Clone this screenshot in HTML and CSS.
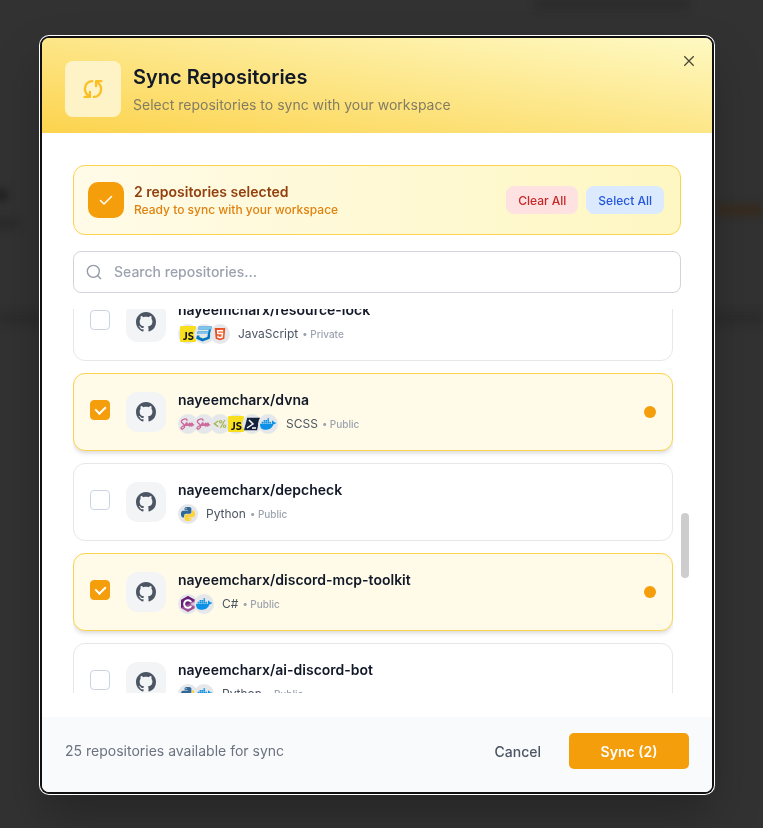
FILE: index.html
```
<!DOCTYPE html>
<html lang="en">
<head>
  <meta charset="UTF-8">
  <meta name="viewport" content="width=device-width, initial-scale=1.0">
  <title>Sync Repositories</title>
  <link rel="stylesheet" href="styles.css">
</head>
<body>
  <!-- Icon sprite -->
  <svg class="sprite" aria-hidden="true">
    <symbol id="icon-github" viewBox="0 0 16 16">
      <path fill="currentColor" d="M8 0C3.58 0 0 3.58 0 8c0 3.54 2.29 6.53 5.47 7.59.4.07.55-.17.55-.38 0-.19-.01-.82-.01-1.49-2.01.37-2.53-.49-2.69-.94-.09-.23-.48-.94-.82-1.13-.28-.15-.68-.52-.01-.53.63-.01 1.08.58 1.23.82.72 1.21 1.87.87 2.33.66.07-.52.28-.87.51-1.07-1.78-.2-3.64-.89-3.64-3.95 0-.87.31-1.59.82-2.15-.08-.2-.36-1.02.08-2.12 0 0 .67-.21 2.2.82.64-.18 1.32-.27 2-.27.68 0 1.36.09 2 .27 1.53-1.04 2.2-.82 2.2-.82.44 1.1.16 1.92.08 2.12.51.56.82 1.27.82 2.15 0 3.07-1.87 3.75-3.65 3.95.29.25.54.73.54 1.48 0 1.07-.01 1.93-.01 2.2 0 .21.15.46.55.38A8.013 8.013 0 0016 8c0-4.42-3.58-8-8-8z"/>
    </symbol>
    <symbol id="icon-js" viewBox="0 0 16 16">
      <rect width="16" height="16" rx="1" fill="#f7df1e"/>
      <text x="3" y="14" font-family="Lato, sans-serif" font-weight="900" font-size="11" fill="#111">JS</text>
    </symbol>
    <symbol id="icon-css" viewBox="0 0 16 16">
      <path fill="#0277bd" d="M2.8.6H16l-2.3 12.2L6.500 15.600.2 12.800l.7-3.200h2.700l-.3 1.400 3.700 1.500 4.300-1.500.6-3.100H1.200l.6-2.700h10.700l.3-1.800H2.300z"/>
      <path fill="#81c4ec" d="M2.8.6H16l-.5 2.800H2.300zM1.800 5.200h10.700l-.5 2.700H1.200z"/>
    </symbol>
    <symbol id="icon-html" viewBox="0 0 16 16">
      <path fill="#e44d26" d="M2 1h12l-1.1 12.4L8 15l-4.900-1.600z"/>
      <path fill="#f16529" d="M8 2h5l-1 10.700L8 14z"/>
      <path fill="none" stroke="#fff" stroke-width="1.6" d="M11.500 4.300H5.200l.3 3.200h5.300l-.4 3.900L8 12.200l-2.400-.8-.1-1.500"/>
    </symbol>
    <symbol id="icon-sass" viewBox="0 0 16 16">
      <path fill="none" stroke="#cd6799" stroke-width="1.3" stroke-linecap="round" d="M7 4.500C7.300 1.700 1.600 3 1.300 5.500 1.100 7.500 5 7.800 4.800 10.300 4.600 12.700.8 14 1 12c.2-2.200 5.600-2.600 6-4.700.2-1.200-1.500.1-1.300 1.600.2 1.500 1.700-.3 2.200-1.600-.5 1.900-.1 2.600 1 1.300l1.200-1.900c-.5 1.600 1 1.700 0 3-.7.8-1.200.1-.4-.4 1.300-.7 2-1.600 2.600-2.600-.5 1.600 1 1.700 0 3-.6.7-1.100.1-.4-.4 1.100-.6 2.300-.9 3.600-.6"/>
    </symbol>
    <symbol id="icon-ejs" viewBox="0 0 16 16">
      <path fill="none" stroke="#a4b648" stroke-width="1.5" d="M6 4.500 1.500 7.700 6 11"/>
      <path fill="none" stroke="#a4b648" stroke-width="1.3" d="M13.500 3.500l-5 9"/>
      <circle cx="8.800" cy="5.300" r="1.400" fill="none" stroke="#a4b648" stroke-width="1.200"/>
      <circle cx="13.200" cy="10.600" r="1.400" fill="none" stroke="#a4b648" stroke-width="1.200"/>
    </symbol>
    <symbol id="icon-powershell" viewBox="0 0 16 16">
      <path fill="#14233c" d="M3.200 1.800H16L13 14.200H0z"/>
      <path fill="none" stroke="#fff" stroke-width="1.5" d="m5 4 4 4-6 4M8 12h4"/>
    </symbol>
    <symbol id="icon-docker" viewBox="0 0 24 24">
      <path fill="#0b92e6" d="M23.763 9.89c-.065-.051-.672-.51-1.954-.51-.338.001-.676.03-1.01.087-.248-1.7-1.653-2.53-1.716-2.566l-.344-.199-.226.327c-.284.438-.49.922-.612 1.43-.23.97-.09 1.882.403 2.661-.595.332-1.55.413-1.744.42H.751a.751.751 0 00-.75.748 11.376 11.376 0 00.692 4.062c.545 1.428 1.355 2.48 2.41 3.124 1.18.723 3.1 1.137 5.275 1.137.983.003 1.963-.086 2.93-.266a12.248 12.248 0 003.823-1.389c.98-.567 1.86-1.288 2.61-2.136 1.252-1.418 1.998-2.997 2.553-4.4h.221c1.372 0 2.215-.549 2.68-1.009.309-.293.55-.65.707-1.046z"/>
      <path fill="#0b92e6" d="M2.500 8.700h2.400v2.400H2.500zM5.400 8.700h2.400v2.400H5.400zM8.300 8.700h2.400v2.400H8.300zM11.200 8.700h2.400v2.400h-2.400zM14.100 8.700h2.400v2.400h-2.400zM5.400 6h2.400v2.300H5.400zM8.300 6h2.400v2.300H8.300zM11.200 6h2.400v2.300h-2.400zM11.200 3.300h2.400v2.300h-2.400z"/>
    </symbol>
    <symbol id="icon-csharp" viewBox="0 0 16 16">
      <path fill="#9b4f96" d="M8 0l7 4v8l-7 4-7-4V4z"/>
      <path fill="#68217a" d="M8 0l7 4L1 12V4z"/>
      <path fill="none" stroke="#fff" stroke-width="2" d="M11.200 6a3.800 3.800 0 1 0 0 4"/>
      <path fill="none" stroke="#fff" stroke-width=".5" d="M11 7.400h3.500M11 8.800h3.500M12.200 6.300v3.500M13.500 6.300v3.500"/>
    </symbol>
    <symbol id="icon-python" viewBox="0 0 24 24">
      <g fill="#306998">
        <path id="snake" d="M14.25.18l.9.2.73.26.59.3.45.32.34.34.25.34.16.33.1.3.04.26.02.2-.01.13V8.5l-.05.63-.13.55-.21.46-.26.38-.3.31-.33.25-.35.19-.35.14-.33.1-.3.07-.26.04-.21.02H8.77l-.69.05-.59.14-.5.22-.41.27-.33.32-.27.35-.2.36-.15.37-.1.35-.07.32-.04.27-.02.21v3.06H3.17l-.21-.03-.28-.07-.32-.12-.35-.18-.36-.26-.36-.36-.35-.46-.32-.59-.28-.73-.21-.88-.14-1.05-.05-1.23.06-1.22.16-1.04.24-.87.32-.71.36-.57.4-.44.42-.33.42-.24.4-.16.36-.1.32-.05.24-.01h.16l.06.01h8.16v-.83H6.18l-.01-2.75-.02-.37.05-.34.11-.31.17-.28.25-.26.31-.23.38-.2.44-.18.51-.15.58-.12.64-.1.71-.06.77-.04.84-.02 1.27.05zm-6.3 1.98l-.23.33-.08.41.08.41.23.34.33.22.41.09.41-.09.33-.22.23-.34.08-.41-.08-.41-.23-.33-.33-.22-.41-.09-.41.09z"/>
      </g>
      <use href="#snake" fill="#ffd43b" transform="rotate(180 12 12)"/>
    </symbol>
  </svg>

  <!-- Dimmed page behind the dialog -->
  <div class="backdrop" aria-hidden="true">
    <span class="smudge smudge-top"></span>
    <span class="smudge smudge-name"></span>
    <span class="smudge smudge-meta"></span>
    <span class="smudge smudge-link"></span>
    <span class="smudge smudge-band"></span>
  </div>

  <div class="overlay">
    <div class="dialog" role="dialog" aria-modal="true" aria-labelledby="dialog-title">
      <header class="dialog-header">
        <div class="header-icon">
          <svg width="20" height="20" viewBox="0 0 24 24" fill="none" stroke="currentColor" stroke-width="2.8" stroke-linecap="round" stroke-linejoin="round">
            <path d="M11 2.500C6 2.500 2.300 6.500 2.300 12c0 3.500 2 6.500 5.500 8.700M2 21.500h6.300v-6"/>
            <path d="M13 21.500c5 0 8.700-4 8.700-9.500 0-3.500-2-6.500-5.500-8.700M22 2.500h-6.300v6"/>
          </svg>
        </div>
        <div class="header-text">
          <h2 class="dialog-title" id="dialog-title">Sync Repositories</h2>
          <p class="dialog-subtitle">Select repositories to sync with your workspace</p>
        </div>
        <button class="close-btn" type="button" aria-label="Close">
          <svg width="16" height="16" viewBox="0 0 16 16" fill="none" stroke="currentColor" stroke-width="1.3">
            <path d="M3.300 3.300l9.400 9.400M12.700 3.300l-9.400 9.400"/>
          </svg>
        </button>
      </header>

      <main class="dialog-body">
        <section class="selection">
          <div class="selection-icon">
            <svg width="16" height="16" viewBox="0 0 16 16" fill="none" stroke="currentColor" stroke-width="1.5" stroke-linecap="round" stroke-linejoin="round">
              <path d="M2.500 8.500l3.500 3.500 7.500-7.500"/>
            </svg>
          </div>
          <div class="selection-text">
            <p class="selection-count">2 repositories selected</p>
            <p class="selection-hint">Ready to sync with your workspace</p>
          </div>
          <button class="pill pill-red" type="button">Clear All</button>
          <button class="pill pill-blue" type="button">Select All</button>
        </section>

        <label class="search">
          <svg width="16" height="16" viewBox="0 0 24 24" fill="none" stroke="currentColor" stroke-width="2" stroke-linecap="round">
            <circle cx="11" cy="11" r="9"/>
            <path d="M22 22l-4.300-4.300"/>
          </svg>
          <input class="search-input" type="text" placeholder="Search repositories..." aria-label="Search repositories">
        </label>

        <div class="repo-area">
          <div class="repo-scroll" id="repo-scroll">
            <label class="repo">
              <input class="repo-check" type="checkbox">
              <span class="repo-avatar"><svg width="20" height="20"><use href="#icon-github"/></svg></span>
              <span class="repo-info">
                <span class="repo-name">nayeemcharx/resource-lock</span>
                <span class="repo-meta">
                  <span class="langs">
                    <span class="lang"><svg width="16" height="16"><use href="#icon-js"/></svg></span>
                    <span class="lang"><svg width="16" height="16"><use href="#icon-css"/></svg></span>
                    <span class="lang"><svg width="14" height="14"><use href="#icon-html"/></svg></span>
                  </span>
                  <span class="lang-name">JavaScript</span>
                  <span class="visibility">• Private</span>
                </span>
              </span>
            </label>

            <label class="repo selected">
              <input class="repo-check" type="checkbox" checked>
              <span class="repo-avatar"><svg width="20" height="20"><use href="#icon-github"/></svg></span>
              <span class="repo-info">
                <span class="repo-name">nayeemcharx/dvna</span>
                <span class="repo-meta">
                  <span class="langs">
                    <span class="lang"><svg width="16" height="16"><use href="#icon-sass"/></svg></span>
                    <span class="lang"><svg width="16" height="16"><use href="#icon-sass"/></svg></span>
                    <span class="lang"><svg width="14" height="14"><use href="#icon-ejs"/></svg></span>
                    <span class="lang"><svg width="16" height="16"><use href="#icon-js"/></svg></span>
                    <span class="lang"><svg width="16" height="16"><use href="#icon-powershell"/></svg></span>
                    <span class="lang"><svg width="16" height="16"><use href="#icon-docker"/></svg></span>
                  </span>
                  <span class="lang-name">SCSS</span>
                  <span class="visibility">• Public</span>
                </span>
              </span>
              <span class="dot"></span>
            </label>

            <label class="repo">
              <input class="repo-check" type="checkbox">
              <span class="repo-avatar"><svg width="20" height="20"><use href="#icon-github"/></svg></span>
              <span class="repo-info">
                <span class="repo-name">nayeemcharx/depcheck</span>
                <span class="repo-meta">
                  <span class="langs">
                    <span class="lang"><svg width="14" height="14"><use href="#icon-python"/></svg></span>
                  </span>
                  <span class="lang-name">Python</span>
                  <span class="visibility">• Public</span>
                </span>
              </span>
            </label>

            <label class="repo selected">
              <input class="repo-check" type="checkbox" checked>
              <span class="repo-avatar"><svg width="20" height="20"><use href="#icon-github"/></svg></span>
              <span class="repo-info">
                <span class="repo-name">nayeemcharx/discord-mcp-toolkit</span>
                <span class="repo-meta">
                  <span class="langs">
                    <span class="lang"><svg width="16" height="16"><use href="#icon-csharp"/></svg></span>
                    <span class="lang"><svg width="16" height="16"><use href="#icon-docker"/></svg></span>
                  </span>
                  <span class="lang-name">C#</span>
                  <span class="visibility">• Public</span>
                </span>
              </span>
              <span class="dot"></span>
            </label>

            <label class="repo">
              <input class="repo-check" type="checkbox">
              <span class="repo-avatar"><svg width="20" height="20"><use href="#icon-github"/></svg></span>
              <span class="repo-info">
                <span class="repo-name">nayeemcharx/ai-discord-bot</span>
                <span class="repo-meta">
                  <span class="langs">
                    <span class="lang"><svg width="14" height="14"><use href="#icon-python"/></svg></span>
                    <span class="lang"><svg width="16" height="16"><use href="#icon-docker"/></svg></span>
                  </span>
                  <span class="lang-name">Python</span>
                  <span class="visibility">• Public</span>
                </span>
              </span>
            </label>
          </div>
          <div class="scroll-track"><div class="scroll-thumb"></div></div>
        </div>
      </main>

      <footer class="dialog-footer">
        <p class="footer-text">25 repositories available for sync</p>
        <button class="btn btn-cancel" type="button">Cancel</button>
        <button class="btn btn-sync" type="button">Sync (2)</button>
      </footer>
    </div>
  </div>

  <script>
    document.getElementById('repo-scroll').scrollTop = 26;
  </script>
</body>
</html>
```
FILE: styles.css
```
* {
  box-sizing: border-box;
}

body {
  margin: 0;
  font-family: Inter, "Liberation Sans", sans-serif;
  font-size: 14px;
  line-height: 20px;
  color: #111827;
  background-color: #323232;
}

h2,
p {
  margin: 0;
}

svg {
  display: block;
}

button {
  font-family: inherit;
  border: none;
  cursor: pointer;
}

.sprite {
  display: none;
}

/* Backdrop */
.backdrop {
  position: fixed;
  inset: 0;
  overflow: hidden;
}

.smudge {
  position: absolute;
  background-color: #202020;
  filter: blur(4px);
}

.smudge-top {
  top: 0;
  right: 74px;
  width: 154px;
  height: 9px;
  opacity: 0.4;
}

.smudge-name {
  top: 190px;
  left: -10px;
  width: 18px;
  height: 10px;
}

.smudge-meta {
  top: 218px;
  left: -10px;
  width: 28px;
  height: 10px;
  opacity: 0.4;
}

.smudge-link {
  top: 205px;
  right: 0;
  width: 46px;
  height: 10px;
  background-color: #3a2814;
  opacity: 0.7;
}

.smudge-band {
  top: 312px;
  left: 0;
  right: 0;
  height: 12px;
  opacity: 0.3;
}

/* Dialog */
.overlay {
  position: relative;
  display: flex;
  align-items: center;
  justify-content: center;
  min-height: 100vh;
  padding: 38px 51px 36px 42px;
}

.dialog {
  width: 100%;
  max-width: 672px;
  overflow: hidden;
  background-color: #ffffff;
  border-radius: 7px;
  box-shadow: 0 0 0 2px #101010, 0 0 0 3px #ffffff, 0 24px 48px rgba(0, 0, 0, 0.25);
}

.dialog-header {
  position: relative;
  display: flex;
  align-items: center;
  gap: 12px;
  padding: 23px 23px 16px;
  background: linear-gradient(to top right, #fcd34d, #fef9c3);
}

.header-icon {
  display: flex;
  align-items: center;
  justify-content: center;
  width: 56px;
  height: 56px;
  border-radius: 8px;
  background-color: #fef3c7;
  color: #fbbf24;
}

.dialog-title {
  margin-bottom: 4px;
  font-size: 20px;
  font-weight: 600;
  line-height: 28px;
}

.dialog-subtitle {
  color: #827c63;
}

.close-btn {
  position: absolute;
  top: 15px;
  right: 15px;
  padding: 0;
  background: none;
  color: #4a473a;
}

.dialog-body {
  display: flex;
  flex-direction: column;
  gap: 16px;
  padding: 32px 23px 24px 31px;
}

/* Selection summary */
.selection {
  display: flex;
  align-items: center;
  gap: 8px;
  margin-right: 8px;
  padding: 16px 16px 16px 14px;
  border: 1px solid #fcd34d;
  border-radius: 12px;
  background: linear-gradient(to right, #fffbe8, #fef7c2);
}

.selection-icon {
  display: flex;
  align-items: center;
  justify-content: center;
  width: 36px;
  height: 36px;
  border-radius: 10px;
  background-color: #f59e0b;
  color: #ffffff;
}

.selection-text {
  flex: 1;
  padding-left: 2px;
}

.selection-count {
  font-weight: 600;
  color: #92400e;
}

.selection-hint {
  font-size: 12px;
  font-weight: 500;
  line-height: 16px;
  color: #e0820f;
}

.pill {
  height: 28px;
  padding: 0 12px;
  border-radius: 8px;
  font-size: 12px;
  font-weight: 500;
}

.pill-red {
  background-color: #fee2e2;
  color: #c62828;
}

.pill-blue {
  background-color: #dbeafe;
  color: #2556dc;
}

/* Search */
.search {
  display: flex;
  align-items: center;
  gap: 12px;
  height: 42px;
  margin-right: 8px;
  padding: 0 12px;
  border: 1px solid #d1d5db;
  border-radius: 8px;
  color: #9299a5;
}

.search-input {
  flex: 1;
  min-width: 0;
  padding: 0;
  border: none;
  outline: none;
  font: inherit;
  font-weight: 500;
}

.search-input::placeholder {
  color: #9ca3af;
}

/* Repository list */
.repo-area {
  display: flex;
  gap: 8px;
  height: 384px;
}

.repo-scroll {
  flex: 1;
  display: flex;
  flex-direction: column;
  gap: 12px;
  min-width: 0;
  overflow-y: auto;
  scrollbar-width: none;
}

.repo {
  display: flex;
  flex-shrink: 0;
  align-items: center;
  padding: 16px;
  border: 1px solid #e5e7eb;
  border-radius: 12px;
  cursor: pointer;
}

.repo.selected {
  border-color: #fcd34d;
  background-color: #fffbe8;
  box-shadow: 0 3px 5px -1px rgba(0, 0, 0, 0.16);
}

.repo-check {
  appearance: none;
  display: flex;
  justify-content: center;
  width: 20px;
  height: 20px;
  margin: 0 16px 5px 0;
  border: 1px solid #cbd5e1;
  border-radius: 4px;
  background-color: #ffffff;
}

.repo-check:checked {
  border-color: #f59e0b;
  background-color: #f59e0b;
}

.repo-check:checked::before {
  content: "";
  width: 5px;
  height: 8px;
  margin-top: 3px;
  border: solid #ffffff;
  border-width: 0 2px 2px 0;
  transform: rotate(45deg);
}

.repo-avatar {
  display: flex;
  align-items: center;
  justify-content: center;
  width: 40px;
  height: 40px;
  margin-right: 12px;
  border-radius: 12px;
  background-color: #f3f4f6;
  color: #4b5563;
}

.repo-info {
  flex: 1;
}

.repo-name {
  display: block;
  margin-bottom: 4px;
  font-weight: 600;
}

.repo-meta {
  display: flex;
  align-items: center;
  gap: 4px;
}

.langs {
  display: flex;
  margin-right: 4px;
}

.lang {
  display: flex;
  align-items: center;
  justify-content: center;
  width: 20px;
  height: 20px;
  border-radius: 50%;
  background-color: #e5e7eb;
}

.lang + .lang {
  margin-left: -4px;
}

.lang-name {
  font-size: 12px;
  color: #4b5563;
}

.visibility {
  font-size: 10px;
  font-weight: 500;
  color: #9ca3af;
}

.dot {
  width: 12px;
  height: 12px;
  border-radius: 50%;
  background-color: #f59e0b;
}

.scroll-track {
  position: relative;
  width: 8px;
}

.scroll-thumb {
  position: absolute;
  top: 53%;
  width: 100%;
  height: 17%;
  border-radius: 4px;
  background-color: #cdcdcd;
}

/* Footer */
.dialog-footer {
  display: flex;
  align-items: center;
  gap: 12px;
  padding: 16px 23px 23px;
  background-color: #f9fafb;
}

.footer-text {
  flex: 1;
  color: #6b7280;
}

.btn {
  height: 36px;
  padding: 0 16px;
  border-radius: 5px;
  font-size: 14px;
}

.btn-cancel {
  background: none;
  font-weight: 500;
  color: #4b5563;
}

.btn-sync {
  min-width: 120px;
  background-color: #f59e0b;
  font-weight: 600;
  color: #ffffff;
}
```
